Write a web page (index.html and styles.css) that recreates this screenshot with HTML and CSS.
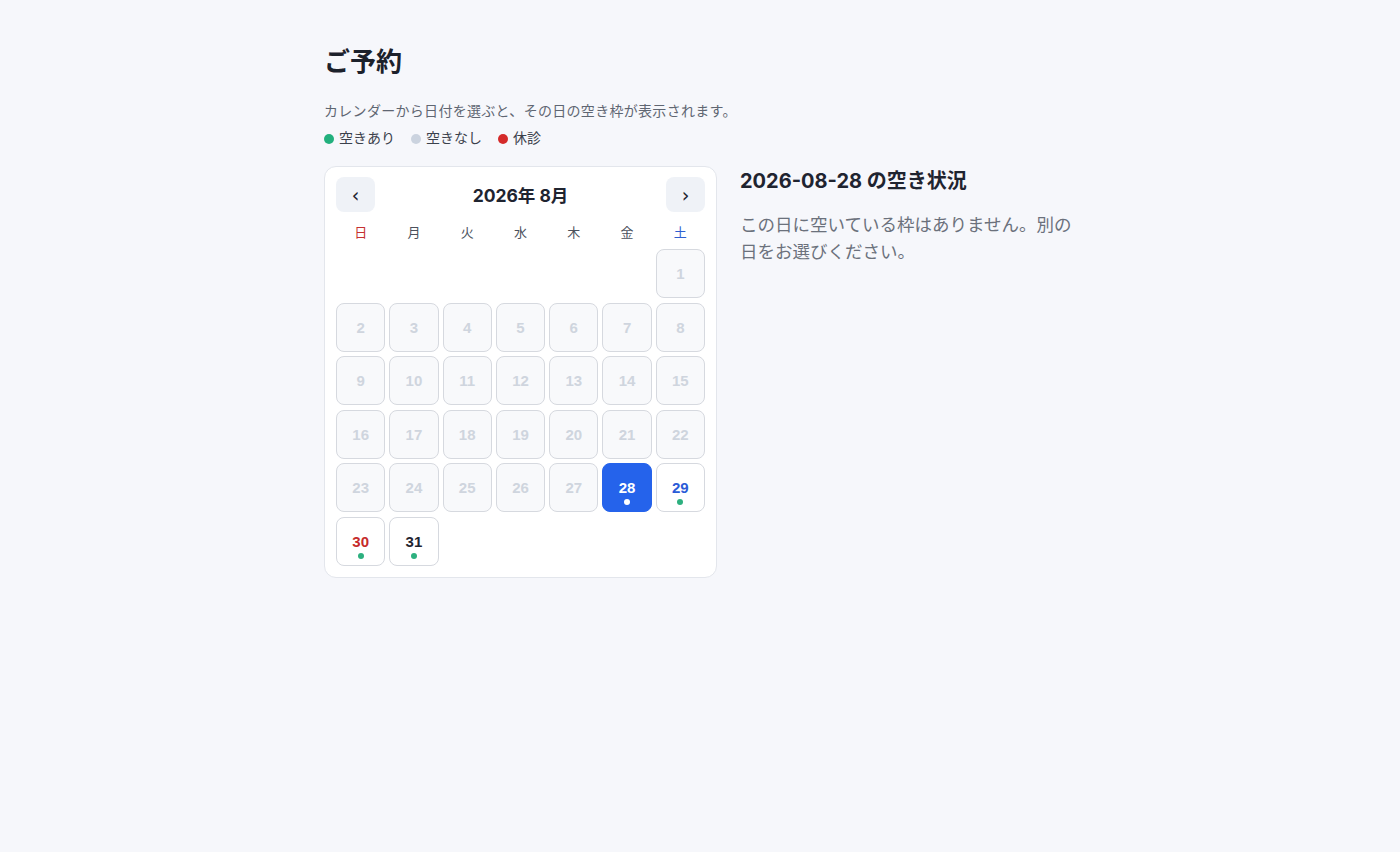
FILE: index.html
```html
<!DOCTYPE html>
<html lang="ja">
<head>
<meta charset="utf-8">
<title>ご予約</title>
<link rel="stylesheet" href="styles.css">
</head>
<body>
<div class="page">
  <h1 class="title">ご予約</h1>
  <p class="lead">カレンダーから日付を選ぶと、その日の空き枠が表示されます。</p>
  <div class="legend">
    <span class="legend-item"><span class="dot dot-green"></span>空きあり</span>
    <span class="legend-item"><span class="dot dot-gray"></span>空きなし</span>
    <span class="legend-item"><span class="dot dot-red"></span>休診</span>
  </div>
  <div class="main">
    <div class="card">
      <div class="cal-head">
        <button class="nav">‹</button>
        <div class="month">2026年 8月</div>
        <button class="nav">›</button>
      </div>
      <div class="weekdays">
        <span class="sun">日</span><span>月</span><span>火</span><span>水</span><span>木</span><span>金</span><span class="sat">土</span>
      </div>
      <div class="days">
        <span class="blank"></span><span class="blank"></span><span class="blank"></span><span class="blank"></span><span class="blank"></span><span class="blank"></span>
        <div class="day off">1</div>
        <div class="day off">2</div><div class="day off">3</div><div class="day off">4</div><div class="day off">5</div><div class="day off">6</div><div class="day off">7</div><div class="day off">8</div>
        <div class="day off">9</div><div class="day off">10</div><div class="day off">11</div><div class="day off">12</div><div class="day off">13</div><div class="day off">14</div><div class="day off">15</div>
        <div class="day off">16</div><div class="day off">17</div><div class="day off">18</div><div class="day off">19</div><div class="day off">20</div><div class="day off">21</div><div class="day off">22</div>
        <div class="day off">23</div><div class="day off">24</div><div class="day off">25</div><div class="day off">26</div><div class="day off">27</div>
        <div class="day selected">28<span class="mark"></span></div>
        <div class="day open sat">29<span class="mark"></span></div>
        <div class="day open sun">30<span class="mark"></span></div>
        <div class="day open">31<span class="mark"></span></div>
      </div>
    </div>
    <div class="detail">
      <h2 class="detail-title">2026-08-28 の空き状況</h2>
      <p class="detail-text">この日に空いている枠はありません。別の日をお選びください。</p>
    </div>
  </div>
</div>
</body>
</html>
```

FILE: styles.css
```css
* { box-sizing: border-box; }
html, body {
  margin: 0;
  background: #f6f7fb;
  font-family: "Liberation Sans", "Noto Sans CJK JP", sans-serif;
  color: #1f2430;
}
.page {
  width: 752px;
  margin: 0 auto;
  padding: 45px 0 40px;
}
.title {
  margin: 0;
  font-size: 26px;
  line-height: 34px;
  font-weight: 700;
  color: #1c212b;
}
.lead {
  margin: 22px 0 0;
  font-size: 14px;
  line-height: 21px;
  letter-spacing: 0.3px;
  color: #5f6672;
}
.legend {
  margin-top: 6px;
  display: flex;
  gap: 16px;
  font-size: 14px;
  line-height: 21px;
  color: #3b414c;
}
.legend-item { display: flex; align-items: center; gap: 5px; }
.dot { width: 10px; height: 10px; border-radius: 50%; display: inline-block; }
.dot-green { background: #22b07d; }
.dot-gray { background: #cbd3df; }
.dot-red { background: #d42a2a; }
.main {
  margin-top: 17px;
  display: flex;
  gap: 23px;
  align-items: flex-start;
}
.card {
  width: 393px;
  flex: none;
  background: #fff;
  border: 1px solid #e3e6ec;
  border-radius: 12px;
  padding: 10px 11px 11px;
}
.cal-head {
  display: flex;
  align-items: center;
  justify-content: space-between;
  height: 35px;
}
.nav {
  width: 39px;
  height: 35px;
  border: none;
  background: #eff2f7;
  border-radius: 8px;
  font-size: 19px;
  font-weight: 400;
  color: #1f2430;
  font-family: "DejaVu Sans", sans-serif;
  padding: 2px 0 0;
  line-height: 33px;
}
.month {
  font-family: Inter, "Noto Sans CJK JP", sans-serif;
  font-size: 17.5px;
  font-weight: 700;
  color: #1f2430;
}
.weekdays {
  display: grid;
  grid-template-columns: repeat(7, 1fr);
  gap: 4px;
  margin-top: 11px;
  font-size: 13px;
  line-height: 20px;
  text-align: center;
  color: #4b515c;
}
.weekdays .sun { color: #c53030; }
.weekdays .sat { color: #2f5fd0; }
.days {
  margin-top: 6px;
  display: grid;
  grid-template-columns: repeat(7, 1fr);
  gap: 4.5px 4px;
}
.day {
  position: relative;
  height: 49px;
  border: 1px solid #d6d9df;
  border-radius: 8px;
  display: flex;
  align-items: center;
  justify-content: center;
  font-size: 15px;
  font-weight: 700;
  background: #fff;
  color: #1f2430;
}
.day.off {
  background: #f8f9fb;
  color: #cfd5de;
}
.day.selected {
  background: #2563eb;
  border-color: #2563eb;
  color: #fff;
}
.day.sat { color: #2a5bd7; }
.day.sun { color: #c62b2b; }
.mark {
  position: absolute;
  left: 50%;
  bottom: 6px;
  width: 6px;
  height: 6px;
  margin-left: -3px;
  border-radius: 50%;
  background: #2db07f;
}
.day.selected .mark { background: #fff; }
.detail {
  width: 340px;
  padding-top: 2px;
}
.detail-title {
  margin: 0;
  font-family: Inter, "Noto Sans CJK JP", sans-serif;
  font-size: 20px;
  line-height: 26px;
  font-weight: 700;
  color: #1f2430;
}
.detail-text {
  margin: 18px 0 0;
  font-size: 17.5px;
  line-height: 27px;
  color: #6b717c;
}
```
